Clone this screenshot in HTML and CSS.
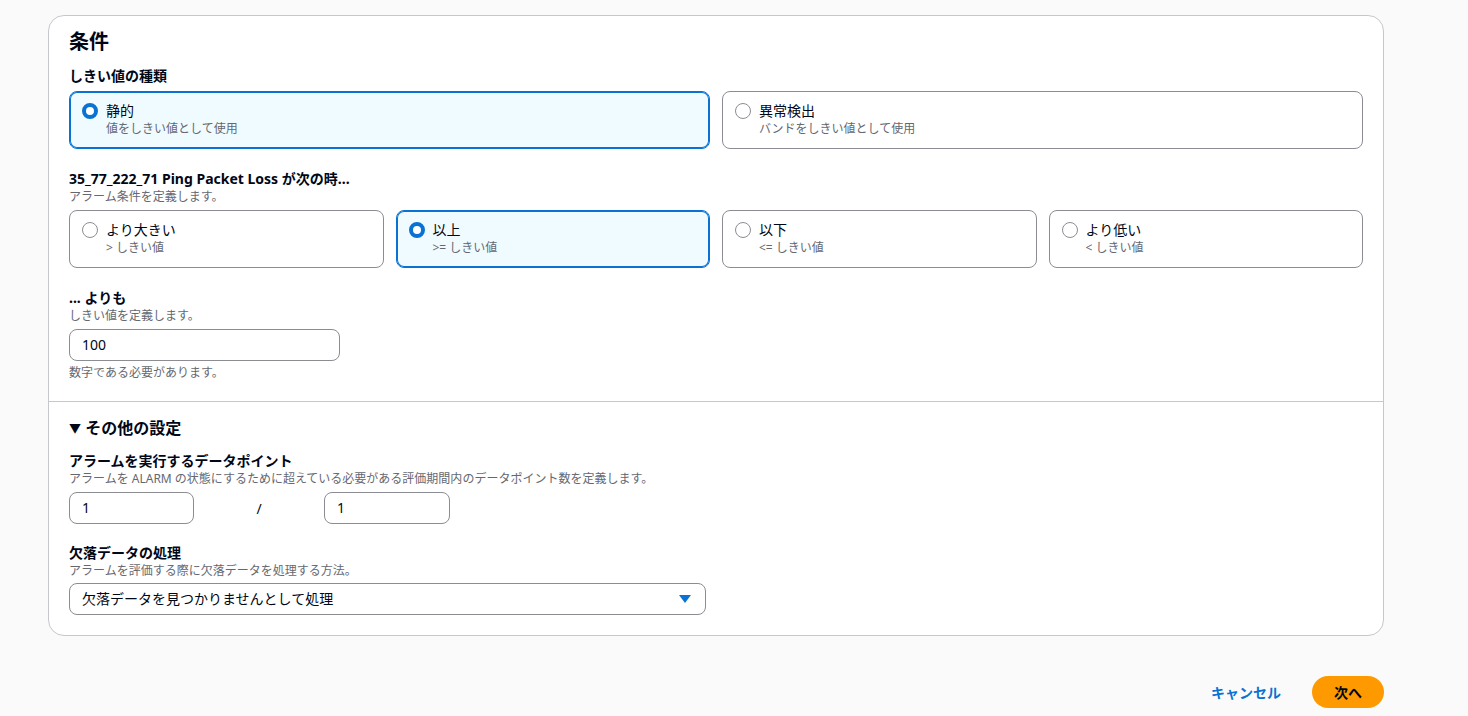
FILE: index.html
```html
<!DOCTYPE html>
<html lang="ja">
<head>
  <meta charset="UTF-8">
  <title>条件</title>
  <link rel="stylesheet" href="styles.css">
</head>
<body>
  <div class="page">
    <div class="card">
      <div class="section">
        <h2 class="card-title">条件</h2>

        <div class="field">
          <div class="label">しきい値の種類</div>
          <div class="tiles tiles-2">
            <div class="tile selected">
              <span class="radio on"></span>
              <div>
                <div class="tile-label">静的</div>
                <div class="tile-desc">値をしきい値として使用</div>
              </div>
            </div>
            <div class="tile">
              <span class="radio"></span>
              <div>
                <div class="tile-label">異常検出</div>
                <div class="tile-desc">バンドをしきい値として使用</div>
              </div>
            </div>
          </div>
        </div>

        <div class="field">
          <div class="label">35_77_222_71 Ping Packet Loss が次の時...</div>
          <div class="desc">アラーム条件を定義します。</div>
          <div class="tiles tiles-4">
            <div class="tile">
              <span class="radio"></span>
              <div>
                <div class="tile-label">より大きい</div>
                <div class="tile-desc">&gt; しきい値</div>
              </div>
            </div>
            <div class="tile selected">
              <span class="radio on"></span>
              <div>
                <div class="tile-label">以上</div>
                <div class="tile-desc">&gt;= しきい値</div>
              </div>
            </div>
            <div class="tile">
              <span class="radio"></span>
              <div>
                <div class="tile-label">以下</div>
                <div class="tile-desc">&lt;= しきい値</div>
              </div>
            </div>
            <div class="tile">
              <span class="radio"></span>
              <div>
                <div class="tile-label">より低い</div>
                <div class="tile-desc">&lt; しきい値</div>
              </div>
            </div>
          </div>
        </div>

        <div class="field">
          <div class="label">... よりも</div>
          <div class="desc">しきい値を定義します。</div>
          <div class="input threshold">100</div>
          <div class="hint">数字である必要があります。</div>
        </div>
      </div>

      <div class="section bottom">
        <div class="expander"><span class="caret">&#9660;</span> その他の設定</div>

        <div class="field">
          <div class="label">アラームを実行するデータポイント</div>
          <div class="desc">アラームを ALARM の状態にするために超えている必要がある評価期間内のデータポイント数を定義します。</div>
          <div class="points">
            <div class="input">1</div>
            <span class="slash">/</span>
            <div class="input">1</div>
          </div>
        </div>

        <div class="field">
          <div class="label">欠落データの処理</div>
          <div class="desc">アラームを評価する際に欠落データを処理する方法。</div>
          <div class="input select">
            <span>欠落データを見つかりませんとして処理</span>
            <svg width="12" height="8" viewBox="0 0 12 8"><path d="M0 0 H12 L6 8 Z" fill="#0972d3"/></svg>
          </div>
        </div>
      </div>
    </div>

    <div class="actions">
      <button class="btn link">キャンセル</button>
      <button class="btn primary">次へ</button>
    </div>
  </div>
</body>
</html>
```

FILE: styles.css
```css
body {
  margin: 0;
  background-color: #fafafa;
  font-family: "Noto Sans", "Noto Sans CJK JP", sans-serif;
  color: #000716;
}

.page {
  width: 1336px;
  margin-left: 48px;
  padding-top: 15px;
}

.card {
  background-color: #fff;
  border: 1px solid #c6c6cd;
  border-radius: 16px;
}

.section {
  padding: 14px 20px 20px;
  display: flex;
  flex-direction: column;
  gap: 20px;
}

.section.bottom {
  border-top: 1px solid #c6c6cd;
  padding-top: 14px;
  gap: 19px;
}

.card-title {
  margin: 0 0 -8px;
  font-size: 20px;
  line-height: 24px;
  font-weight: 700;
}

.expander {
  font-size: 16px;
  line-height: 24px;
  font-weight: 700;
  margin-bottom: -9px;
}

.caret {
  font-size: 12px;
  vertical-align: 1px;
}

.label {
  font-size: 14px;
  line-height: 20px;
  font-weight: 700;
}

.desc, .hint {
  font-size: 12px;
  line-height: 16px;
  color: #656871;
}

.hint {
  margin-top: 4px;
}

.tiles {
  display: grid;
  gap: 12px;
  margin-top: 5px;
}

.tiles-2 {
  grid-template-columns: 1fr 1fr;
}

.tiles-4 {
  grid-template-columns: repeat(4, 1fr);
}

.tile {
  display: flex;
  align-items: flex-start;
  gap: 8px;
  height: 58px;
  box-sizing: border-box;
  padding: 9px 12px 0;
  border: 1px solid #8c8c94;
  border-radius: 8px;
}

.tile.selected {
  border-color: #0972d3;
  box-shadow: inset 0 0 0 1px #0972d3;
  background-color: #f0fbff;
}

.radio {
  width: 16px;
  height: 16px;
  box-sizing: border-box;
  border: 1.5px solid #8c8c94;
  border-radius: 50%;
  margin-top: 2px;
  flex-shrink: 0;
}

.radio.on {
  border: 4.5px solid #0972d3;
  background-color: #fff;
}

.tile-label {
  font-size: 14px;
  line-height: 20px;
}

.tile-desc {
  font-size: 12px;
  line-height: 16px;
  color: #656871;
}

.input {
  height: 32px;
  box-sizing: border-box;
  border: 1px solid #8c8c94;
  border-radius: 8px;
  padding: 0 12px;
  font-size: 14px;
  line-height: 30px;
  margin-top: 5px;
}

.threshold {
  width: 271px;
}

.points {
  display: grid;
  grid-template-columns: 125px 130px 126px;
  align-items: center;
  margin-top: 5px;
}

.points .input {
  margin-top: 0;
}

.slash {
  text-align: center;
  font-size: 14px;
}

.select {
  width: 637px;
  display: flex;
  justify-content: space-between;
  align-items: center;
  padding-right: 14px;
  margin-top: 4px;
}

.actions {
  display: flex;
  justify-content: flex-end;
  gap: 11px;
  margin-top: 40px;
}

.btn {
  font-family: inherit;
  font-size: 14px;
  font-weight: 700;
  height: 32px;
  border: none;
  border-radius: 20px;
  padding: 0 20px;
  cursor: pointer;
}

.btn.link {
  background: none;
  color: #0972d3;
}

.btn.primary {
  background-color: #ff9900;
  color: #000716;
  padding: 0 22px;
}
```
